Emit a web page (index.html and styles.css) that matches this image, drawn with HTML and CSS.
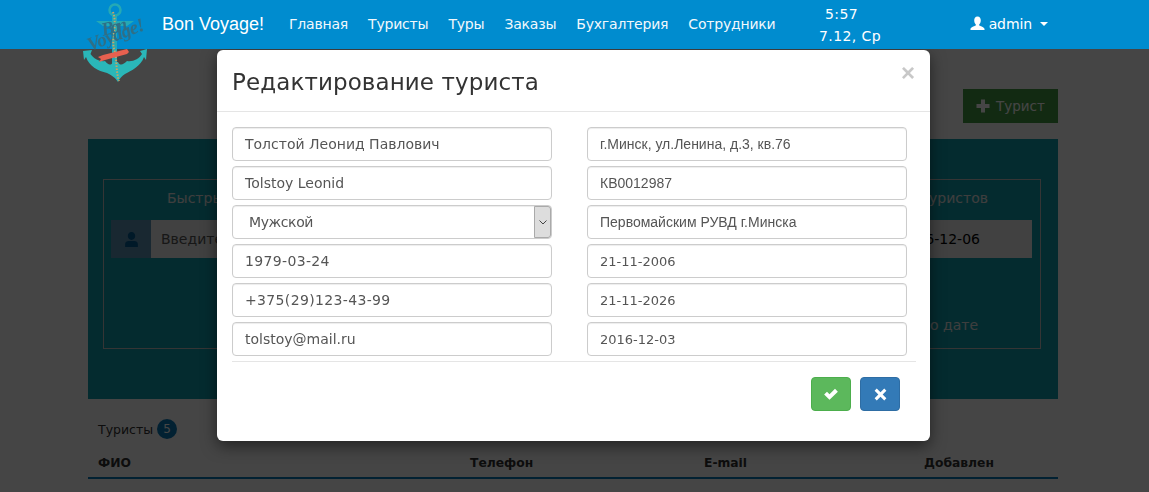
FILE: index.html
```html
<!DOCTYPE html>
<html lang="ru">
<head>
<meta charset="utf-8">
<title>Bon Voyage!</title>
<link rel="stylesheet" href="styles.css">
</head>
<body>
<header class="navbar">
  <div class="nav-inner">
    <svg class="logo" viewBox="80 0 70 85" width="70" height="85" aria-hidden="true">
      <circle cx="115" cy="10" r="5.500" fill="none" stroke="#25a9b5" stroke-width="2.500"/>
      <path d="M96 21 H134 L127 26 H118 V31 H111 V26 H103 Z" fill="#25a9b5"/>
      <rect x="112" y="15" width="5" height="50" fill="#25a9b5"/>
      <path d="M83 51 L92 50 L90.500 54 C94 59 100 62 105 61 C108 65 111 66 113 62 L118 62 C120 66 123 65 127 61 C133 62 139 59 142 54 L140 51 L147 49 L146 60 L144 57 C141 66 131 71 125 74 C122 76 120 78 118 82 C115 77 111 75 107 73 C98 71 89 66 86 57 L84 60 Z" fill="#2ab7b9"/>
      <path d="M113 12 C118 26 110 40 115 52 C117 62 116 72 119 81" fill="none" stroke="#c9a565" stroke-width="2" stroke-dasharray="1.500 1.500"/>
      <g class="logo-script">
        <text x="103" y="36" transform="rotate(-14 103 36)" textLength="26" class="logo-line">Bon</text>
        <text x="90" y="51" transform="rotate(-21 90 51)" textLength="60" class="logo-line">Voyage!</text>
      </g>
      <path d="M98 57 L103 55 L127 49 L129 52 L127 54 L105 60 L99 62 L101 59 Z" fill="#e8604f"/>
    </svg>
    <a class="brand">Bon Voyage!</a>
    <nav class="menu">
      <a>Главная</a><a>Туристы</a><a>Туры</a><a>Заказы</a><a>Бухгалтерия</a><a>Сотрудники</a>
    </nav>
    <div class="clock"><div class="clock-time">5:57</div><div class="clock-date">7.12, Ср</div></div>
    <a class="user">
      <svg class="icon-user" viewBox="0 0 16 16" width="15" height="15" aria-hidden="true"><path d="M8 0.500 C10.500 0.500 11.500 2.500 11.500 4.800 C11.500 6.800 10.600 8.300 9.800 9 L9.800 10 C12 11 15.500 11.800 15.500 14 V15 H0.500 V14 C0.500 11.800 4 11 6.200 10 L6.200 9 C5.400 8.300 4.500 6.800 4.500 4.800 C4.500 2.500 5.500 0.500 8 0.500 Z" fill="currentColor"/></svg>
      <span>admin</span><span class="caret"></span>
    </a>
  </div>
</header>

<main class="page">
  <div class="toolbar">
    <a class="btn-add"><svg viewBox="0 0 14 14" width="14" height="14" aria-hidden="true"><path d="M5 0.500 H9 V5 H13.500 V9 H9 V13.500 H5 V9 H0.500 V5 H5 Z" fill="currentColor"/></svg>Турист</a>
  </div>
  <section class="panel">
    <div class="panel-box">
      <div class="panel-col">
        <h3 class="panel-title">Быстрый поиск</h3>
        <div class="search">
          <span class="search-icon"><svg viewBox="0 0 16 16" width="17" height="17" aria-hidden="true"><path d="M8 1 C10.200 1 11.500 2.700 11.500 4.800 C11.500 6.800 10 8.500 8 8.500 C6 8.500 4.500 6.800 4.500 4.800 C4.500 2.700 5.800 1 8 1 Z M2 15 V12.500 C2 10.500 3.500 9.500 5.500 9.500 H10.500 C12.500 9.500 14 10.500 14 12.500 V15 Z" fill="currentColor"/></svg></span>
          <span class="search-text">Введите ФИО</span>
        </div>
      </div>
      <div class="panel-col panel-col-right">
        <h3 class="panel-title">Поиск новых туристов</h3>
        <div class="search search-date">2016-12-06</div>
        <div class="by-date">Поиск по дате</div>
      </div>
    </div>
  </section>
  <div class="list-head">Туристы <span class="badge">5</span></div>
  <div class="thead"><span>ФИО</span><span>Телефон</span><span>E-mail</span><span>Добавлен</span></div>
</main>

<div class="backdrop"></div>

<div class="modal">
  <div class="modal-header">
    <h2 class="modal-title">Редактирование туриста</h2>
    <span class="close">×</span>
  </div>
  <div class="modal-body">
    <div class="form-grid">
      <div class="col">
        <div class="field">Толстой Леонид Павлович</div>
        <div class="field">Tolstoy Leonid</div>
        <div class="field field-select"><span class="select-value">Мужской</span><span class="select-arrow"><svg viewBox="0 0 8 5" width="8" height="5" aria-hidden="true"><path d="M0.500 0.500 L4 4 L7.500 0.500" fill="none" stroke="#444" stroke-width="1"/></svg></span></div>
        <div class="field field-num">1979-03-24</div>
        <div class="field field-num">+375(29)123-43-99</div>
        <div class="field">tolstoy@mail.ru</div>
      </div>
      <div class="col">
        <div class="field field-alt">г.Минск, ул.Ленина, д.3, кв.76</div>
        <div class="field field-alt">КВ0012987</div>
        <div class="field field-alt">Первомайским РУВД г.Минска</div>
        <div class="field field-date">21-11-2006</div>
        <div class="field field-date">21-11-2026</div>
        <div class="field field-date">2016-12-03</div>
      </div>
    </div>
    <div class="modal-actions">
      <button class="btn btn-ok" type="button"><svg viewBox="0 0 14 14" width="16" height="16" aria-hidden="true"><path d="M1 7.500 L3.500 5 L5.700 7.200 L10.500 2.500 L13 5 L5.700 12 Z" fill="#fff"/></svg></button>
      <button class="btn btn-cancel" type="button"><svg viewBox="0 0 14 14" width="15" height="15" aria-hidden="true"><path d="M3.500 1.500 L7 5 L10.500 1.500 L12.500 3.500 L9 7 L12.500 10.500 L10.500 12.500 L7 9 L3.500 12.500 L1.500 10.500 L5 7 L1.500 3.500 Z" fill="#fff"/></svg></button>
    </div>
  </div>
</div>
</body>
</html>
```
FILE: styles.css
```css
* { box-sizing: border-box; }
html, body { margin: 0; height: 492px; overflow: hidden; }
body {
  background: #fff;
  font-family: "DejaVu Sans", Verdana, sans-serif;
  font-size: 14px;
  color: #333;
}

/* Navbar */
.navbar {
  position: relative;
  z-index: 30;
  height: 49px;
  background: #008ccf;
  color: #fff;
}
.nav-inner {
  position: relative;
  display: flex;
  align-items: center;
  height: 47px;
  margin-left: 162px;
  width: 896px;
}
.logo { position: absolute; left: -82px; top: 0; overflow: visible; }
.logo-script { font-family: "Liberation Serif", serif; font-style: italic; font-weight: 700; fill: #2f6f86; }
.logo-line { font-size: 19px; }
.brand {
  font-family: "Liberation Sans", Arial, sans-serif;
  font-size: 18px;
  width: 127px;
  flex: none;
  margin-top: 2px;
}
.menu { display: flex; gap: 20px; width: 529px; flex: none; margin-top: 1px; }
.menu a { color: #f2f8fc; font-size: 14px; letter-spacing: -.2px; }
.clock { width: 120px; flex: none; font-size: 14px; letter-spacing: .4px; line-height: 22px; margin-top: 3px; }
.clock-time { padding-left: 7px; }
.clock-date { padding-left: 1px; }
.user {
  margin-left: auto;
  display: flex;
  align-items: center;
  gap: 4px;
  font-size: 14px;
  letter-spacing: -.1px;
  margin-right: 10px;
}
.icon-user { flex: none; margin-top: -1px; }
.caret {
  width: 0; height: 0;
  border-left: 4px solid transparent;
  border-right: 4px solid transparent;
  border-top: 4px solid #fff;
  margin-left: 4px;
}

/* Page behind the dialog */
.page { width: 970px; margin-left: 88px; }
.toolbar { display: flex; justify-content: flex-end; padding-top: 40px; height: 90px; }
.btn-add {
  display: flex;
  align-items: center;
  gap: 6px;
  width: 95px;
  height: 34px;
  padding-left: 13px;
  background: #449d44;
  color: #fff;
  font-size: 13.500px;
}
.panel { height: 260px; background: #12a0ae; padding: 40px 17px 0 15px; }
.panel-box {
  display: grid;
  grid-template-columns: 1fr 1fr;
  height: 170px;
  border: 1px solid #c5c5c5;
  padding: 0 8px 0 7px;
  color: #fff;
}
.panel-col { min-width: 0; }
.panel-title {
  margin: 9px 0 12px;
  padding-left: 56px;
  font-size: 14px;
  font-weight: 400;
  line-height: 19px;
  color: #e5e5e5;
}
.panel-col-right .panel-title { text-align: right; padding-right: 44px; }
.search { display: flex; height: 38px; background: #eee; align-items: center; color: #555; }
.search-icon {
  display: flex;
  align-items: center;
  justify-content: center;
  width: 40px;
  height: 38px;
  background: #5f93b5;
  color: #005c94;
}
.search-text { padding-left: 10px; }
.search-date { justify-content: flex-end; padding-right: 52px; color: #000; }
.by-date { margin-top: 59px; text-align: right; padding-right: 54px; color: #e5e5e5; }
.list-head { display: flex; align-items: center; gap: 4px; margin-top: 20px; padding-left: 10px; height: 20px; color: #333; font-size: 12.500px; }
.badge {
  display: inline-flex;
  align-items: center;
  justify-content: center;
  width: 20px;
  height: 20px;
  border-radius: 10px;
  background: #0a7ab8;
  color: #fff;
  font-size: 12px;
}
.thead {
  display: grid;
  grid-template-columns: 372px 234px 220px 1fr;
  margin-top: 16px;
  padding: 0 0 5px 10px;
  border-bottom: 2px solid #0a7ab8;
  font-weight: 700;
  font-size: 12.300px;
  line-height: 17px;
}

/* Dialog overlay */
.backdrop {
  position: fixed;
  inset: 0;
  z-index: 10;
  background: rgba(0, 0, 0, .73);
}
.modal {
  position: absolute;
  z-index: 20;
  left: 217px;
  top: 50px;
  width: 713px;
  height: 391px;
  background: #fff;
  border-radius: 6px;
  box-shadow: 0 5px 15px rgba(0, 0, 0, .5);
}
.modal-header {
  display: flex;
  justify-content: space-between;
  height: 62px;
  padding: 15px 15px 0;
  border-bottom: 1px solid #e5e5e5;
}
.modal-title { margin: 0; font-size: 23px; font-weight: 400; line-height: 34px; letter-spacing: .1px; color: #333; }
.close {
  color: #c8c8c8;
  font-family: "Liberation Sans", Arial, sans-serif;
  font-size: 24px;
  font-weight: 700;
  line-height: 16px;
  margin: 0 0 0 auto;
}
.modal-body { padding: 15px 14px 0 15px; }
.form-grid { display: grid; grid-template-columns: 320px 320px; column-gap: 35px; height: 235px; border-bottom: 1px solid #e5e5e5; }
.col { display: flex; flex-direction: column; gap: 5px; }
.field {
  display: flex;
  align-items: center;
  height: 34px;
  padding: 0 12px;
  border: 1px solid #ccc;
  border-radius: 4px;
  color: #555;
  font-size: 14px;
  box-shadow: inset 0 1px 1px rgba(0, 0, 0, .075);
}
.field-alt { font-family: "Liberation Sans", Arial, sans-serif; }
.field-date { font-size: 13px; }
.field-num { letter-spacing: .35px; }
.field-select { justify-content: space-between; padding: 0 0 0 16px; }
.select-value { letter-spacing: -.4px; }
.select-arrow {
  display: flex;
  align-items: center;
  justify-content: center;
  width: 17px;
  height: 32px;
  background: #ddd;
  border: 1px solid #aaa;
  border-radius: 0 3px 3px 0;
}
.modal-actions { display: flex; justify-content: flex-end; gap: 9px; padding: 15px 16px 0 0; }
.btn {
  display: flex;
  align-items: center;
  justify-content: center;
  width: 40px;
  height: 34px;
  padding: 0;
  border: 1px solid;
  border-radius: 4px;
}
.btn-ok { background: #5cb85c; border-color: #4cae4c; }
.btn-cancel { background: #337ab7; border-color: #2e6da4; }
```
